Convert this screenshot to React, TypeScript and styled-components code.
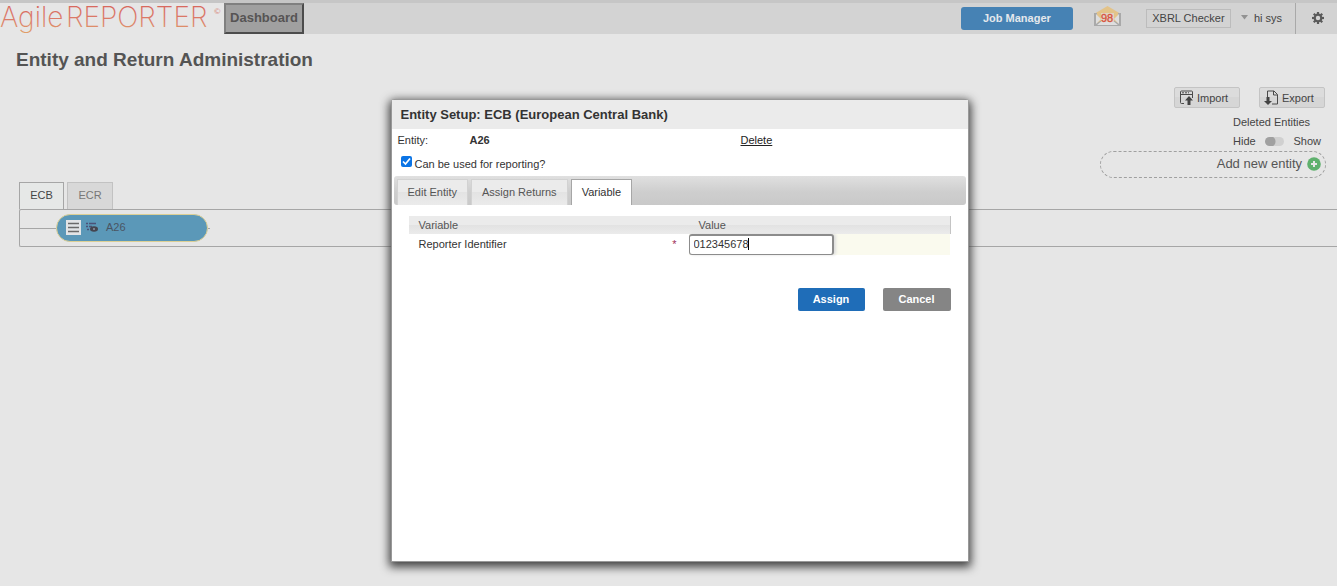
import React from 'react';
import styled, { createGlobalStyle } from 'styled-components';

const GlobalStyle = createGlobalStyle`
  * { box-sizing: border-box; }
  body {
    margin: 0;
    background: #e6e6e6;
    font-family: "Liberation Sans", Arial, sans-serif;
    font-size: 11px;
    color: #444;
  }
  button, input { font-family: inherit; font-size: inherit; color: inherit; }
`;

const Page = styled.div`
  position: relative;
  min-height: 100vh;
  overflow: hidden;
`;

const TopBar = styled.header`
  display: flex;
  height: 34px;
  border-top: 3px solid #c6c6c6;
  background: #d3d3d3;
`;

const LogoArea = styled.div`
  display: flex;
  align-items: center;
  width: 224px;
  background: #e6e6e6;
`;

const Logo = styled.svg`
  display: block;
  width: 224px;
  height: 31px;
  overflow: visible;
  font-optical-sizing: none;
`;

const DashboardButton = styled.button`
  width: 80px;
  height: 31px;
  padding: 0 0 2px;
  border: 2px solid;
  border-color: #808080 #4c4c4c #4c4c4c #808080;
  background: #a0a0a0;
  color: #565454;
  font-size: 13px;
  font-weight: bold;
`;

const TopActions = styled.div`
  display: flex;
  align-items: center;
  margin-left: auto;
`;

const JobButton = styled.button`
  width: 112px;
  height: 23px;
  padding: 0 0 2px;
  margin-right: 20px;
  border: 0;
  border-radius: 3px;
  background: #4682b4;
  color: #e4e8ec;
  font-weight: bold;
`;

const MailIcon = styled.svg`
  display: block;
  width: 29px;
  height: 22px;
  margin: 0 24px 5px 0;
`;

const CheckerButton = styled.button`
  width: 85px;
  height: 19px;
  padding: 0;
  margin: 0 10px 1px 0;
  border: 1px solid #bcbcbc;
  background: #d3d3d3;
  white-space: nowrap;
`;

const UserButton = styled.button`
  display: flex;
  align-items: center;
  gap: 6px;
  height: 100%;
  padding: 0 13px 2px 0;
  border: 0;
  border-right: 1px solid #a9a9a9;
  background: none;
`;

const SettingsButton = styled.button`
  display: flex;
  align-items: center;
  justify-content: center;
  width: 41px;
  height: 100%;
  padding: 0 0 2px 2px;
  border: 0;
  background: none;
`;

const Title = styled.h1`
  margin: 0;
  padding: 14px 16px 0;
  font-size: 19px;
  line-height: 24px;
  color: #545454;
`;

const Tools = styled.section`
  display: flex;
  flex-direction: column;
  align-items: flex-end;
  padding: 15px 11px 0 0;
`;

const ToolRow = styled.div`
  display: flex;
  gap: 19px;
  margin-right: 1px;
`;

const ToolButton = styled.button`
  display: flex;
  align-items: center;
  gap: 3px;
  width: 66px;
  height: 21px;
  padding: 0 4px;
  border: 1px solid #c4c4c4;
  border-radius: 2px;
  background: linear-gradient(#dcdcdc 50%, #d6d6d6 50%);
`;

const DeletedGroup = styled.div`
  width: 93px;
  line-height: 19px;
  padding-top: 5px;
`;

const SwitchLabel = styled.label`
  display: flex;
  align-items: center;
  justify-content: space-between;
  width: 88px;
`;

const Switch = styled.input`
  appearance: none;
  width: 19px;
  height: 9px;
  margin: 0;
  border-radius: 5px;
  background: radial-gradient(circle at 5px 50%, #a0a0a0 5px, #d0d0d0 6px);
`;

const AddEntity = styled.button`
  display: flex;
  align-items: center;
  justify-content: flex-end;
  gap: 5px;
  width: 226px;
  height: 27px;
  padding: 0 4px 2px;
  border: 1px dashed #a0a0a0;
  border-radius: 14px;
  background: none;
  font-size: 13px;
  color: #555;
`;

const EntityTabs = styled.nav`
  display: flex;
  gap: 3px;
  margin: 4px 0 0 19px;
`;

const EntityTab = styled.button<{ $active?: boolean }>`
  width: ${p => (p.$active ? 45 : 46)}px;
  height: 27px;
  padding: 0 0 2px;
  border: 1px solid ${p => (p.$active ? '#a6a6a6' : '#c2c2c2')};
  border-bottom: 0;
  background: ${p => (p.$active ? '#e6e8e7' : '#d8d8d8')};
  color: ${p => (p.$active ? '#444' : '#777')};
`;

const EntityTree = styled.div`
  display: flex;
  align-items: center;
  height: 38px;
  margin-left: 19px;
  border: 1px solid #a6a6a6;
  border-right: 0;
  border-radius: 2px 0 0 2px;
`;

const Branch = styled.div`
  width: 36px;
  border-top: 1px solid #a6a6a6;
`;

const BranchEnd = styled(Branch)`
  width: 2px;
`;

const EntityNode = styled.button`
  display: flex;
  align-items: center;
  width: 152px;
  height: 28px;
  padding: 0 9px 2px;
  border: 1px solid #dccf94;
  border-radius: 14px;
  background: #5b98b8;
  color: #4a5563;
`;

const MenuIcon = styled.svg`
  background: #e2e4e6;
  margin-right: 5px;
`;

const NodeName = styled.span`
  margin-left: 8px;
`;

const Overlay = styled.div`
  position: absolute;
  inset: 0;
  display: flex;
  justify-content: center;
  align-items: flex-start;
  padding: 99px 0 0 22px;
`;

const Dialog = styled.section`
  width: 578px;
  min-height: 463px;
  border: 1px solid #999;
  border-radius: 3px 3px 0 0;
  background: #fff;
  box-shadow: 0 3px 10px 2px #404040;
  color: #333;
`;

const DialogTitle = styled.h2`
  margin: 0;
  padding: 0 9px;
  background: #ebebeb;
  font-size: 13px;
  line-height: 29px;
`;

const EntityLine = styled.div`
  display: flex;
  align-items: center;
  height: 21px;
  padding: 0 6px;
`;

const EntityCaption = styled.span`
  width: 72px;
`;

const EntityValue = styled.strong`
  width: 271px;
`;

const DeleteLink = styled.a`
  color: #222;
  text-decoration: underline;
`;

const ReportingLabel = styled.label`
  display: flex;
  align-items: center;
  gap: 3px;
  height: 26px;
  padding: 1px 9px 0;
`;

const ReportingCheck = styled.input`
  appearance: none;
  width: 11px;
  height: 11px;
  margin: 0;
  border-radius: 2px;
  background: #0b74e5;
`;

const CheckWrap = styled.span`
  position: relative;
  display: flex;
  margin-bottom: 5px;
`;

const CheckMark = styled.svg`
  position: absolute;
  inset: 0;
  pointer-events: none;
`;

const TabStrip = styled.nav`
  display: flex;
  align-items: flex-end;
  gap: 3px;
  height: 29px;
  margin: 0 2px;
  padding: 0 3px;
  border-radius: 3px;
  background: linear-gradient(#e0e0e0, #cecece 55%, #c9c9c9);
`;

const Tab = styled.button<{ $active?: boolean }>`
  height: 26px;
  padding: 0 10px 2px;
  border: 1px solid ${p => (p.$active ? '#a6a6a6' : '#d2d2d2')};
  border-bottom: 0;
  background: ${p => (p.$active ? '#fff' : 'linear-gradient(#ebebeb 50%, #e3e3e3 50%, #ebebeb)')};
  color: ${p => (p.$active ? '#333' : '#555')};
  white-space: nowrap;
`;

const TabPanel = styled.div`
  padding: 11px 17px;
`;

const Variables = styled.table`
  width: 100%;
  table-layout: fixed;
  border-collapse: collapse;
`;

const HeadRow = styled.tr`
  height: 18px;
  background: linear-gradient(#ebebeb 50%, #e2e2e2 50%, #ebebeb);
  border-right: 1px solid #c4c4c4;
`;

const HeadCell = styled.th<{ $width?: number }>`
  width: ${p => (p.$width ? `${p.$width}px` : 'auto')};
  padding: 0 10px;
  font-weight: normal;
  text-align: left;
  color: #555;
`;

const NameCell = styled.td`
  padding: 0 12px 2px 10px;
`;

const NameLine = styled.div`
  display: flex;
  justify-content: space-between;
`;

const Required = styled.span`
  color: #a0305a;
`;

const ValueCell = styled.td`
  height: 21px;
  padding: 0;
  background: #fafaee;
`;

const ValueField = styled.div`
  position: relative;
  width: 145px;
`;

const ValueInput = styled.input`
  display: block;
  width: 145px;
  height: 21px;
  padding: 0 4px 2px;
  border: 1px solid #8c8c8c;
  border-top-width: 2px;
  border-right-width: 2px;
  border-radius: 3px;
  outline: 0;
  background: #fff;
  box-shadow: 2px 0 3px #ddd;
`;

const Caret = styled.span`
  position: absolute;
  left: 59px;
  top: 4px;
  width: 1px;
  height: 12px;
  background: #000;
`;

const Actions = styled.div`
  display: flex;
  justify-content: flex-end;
  gap: 18px;
  padding-top: 33px;
`;

const ActionButton = styled.button<{ $primary?: boolean }>`
  width: ${p => (p.$primary ? 67 : 68)}px;
  height: 23px;
  padding: 0 0 2px;
  border: 0;
  border-radius: 2px;
  background: ${p => (p.$primary ? '#1f6db8' : '#858585')};
  color: #fff;
  font-weight: bold;
`;

const teeth = [0, 45, 90, 135, 180, 225, 270, 315];

export default function App() {
  return (
    <>
      <GlobalStyle />
      <Page>
        <TopBar>
          <LogoArea>
            <Logo viewBox="0 0 224 31" role="img" aria-label="AgileREPORTER">
              <defs>
                <linearGradient id="brand" gradientUnits="userSpaceOnUse" x1="0" y1="4" x2="0" y2="32">
                  <stop offset="0" stopColor="#d8695f" />
                  <stop offset="0.5" stopColor="#dc7e6a" />
                  <stop offset="1" stopColor="#e0a468" />
                </linearGradient>
              </defs>
              <text y="24" fontFamily="Inter, sans-serif" fontWeight="200" fontSize="28" fill="url(#brand)">
                <tspan x="0">Agile</tspan><tspan x="66">REPORTER</tspan>
              </text>
              <text x="214" y="11" fontFamily="Lato, sans-serif" fontSize="8" fill="#d8897c">©</text>
            </Logo>
          </LogoArea>
          <DashboardButton>Dashboard</DashboardButton>
          <TopActions>
            <JobButton>Job Manager</JobButton>
            <MailIcon viewBox="0 0 29 22" role="img" aria-label="98 messages">
              <path d="M1 9 L14.500 1 L28 9 V21 H1Z" fill="#e3c389" />
              <path d="M1 8 H4 V18 L9 15 H20 L25 18 V8 H28 V21 H1Z" fill="#a9a9a9" />
              <path d="M3 9 L8 14 L3 19Z M26 9 L21 14 L26 19Z M4 20 L10 15 H19 L25 20Z" fill="#dedede" />
              <rect x="8" y="8" width="13" height="9" fill="#e0d3c3" />
              <text x="14" y="17" textAnchor="middle" fontSize="11" fill="#d8503c" stroke="#d8503c" strokeWidth="0.300">98</text>
            </MailIcon>
            <CheckerButton>XBRL Checker</CheckerButton>
            <UserButton>
              <svg width="7" height="5" viewBox="0 0 7 5"><path d="M0 0h7L3.500 4.500z" fill="#929292" /></svg>
              hi sys
            </UserButton>
            <SettingsButton aria-label="Settings">
              <svg width="12" height="12" viewBox="0 0 12 12">
                <circle cx="6" cy="6" r="3.300" fill="none" stroke="#5a5a5a" strokeWidth="2.200" />
                {teeth.map(a => (
                  <rect key={a} x="4.900" y="0" width="2.200" height="2.600" fill="#5a5a5a" transform={`rotate(${a} 6 6)`} />
                ))}
              </svg>
            </SettingsButton>
          </TopActions>
        </TopBar>

        <Title>Entity and Return Administration</Title>

        <Tools>
          <ToolRow>
            <ToolButton>
              <svg width="15" height="15" viewBox="0 0 15 15" fill="none" stroke="#4a4a4a">
                <path d="M5 13.500H2.500Q1.500 13.500 1.500 12.500V2Q1.500 1 2.500 1H12.500Q13.500 1 13.500 2V8M1.500 4.500H13.500" />
                <path d="M3 2.800H10" strokeDasharray="2 1" />
                <path d="M10 6L14 10.500H11.500V15H8.500V10.500H6Z" fill="#444" stroke="none" />
              </svg>
              Import
            </ToolButton>
            <ToolButton>
              <svg width="15" height="15" viewBox="0 0 15 15" fill="none" stroke="#4a4a4a">
                <path d="M3.500 7V1H10L13.500 4.500V14H8M9.500 1V5H13.500" />
                <path d="M2.500 7H5.500V11H8L4 15L0 11H2.500Z" fill="#444" stroke="none" />
              </svg>
              Export
            </ToolButton>
          </ToolRow>
          <DeletedGroup>
            <div>Deleted Entities</div>
            <SwitchLabel>
              Hide
              <Switch type="checkbox" role="switch" aria-label="Show deleted entities" />
              Show
            </SwitchLabel>
          </DeletedGroup>
          <AddEntity>
            Add new entity
            <svg width="14" height="14" viewBox="0 0 14 14">
              <circle cx="7" cy="7" r="6.800" fill="#5fb06d" />
              <path d="M7 4V10M4 7H10" stroke="#e6e6e6" strokeWidth="2" />
            </svg>
          </AddEntity>
        </Tools>

        <EntityTabs>
          <EntityTab $active>ECB</EntityTab>
          <EntityTab>ECR</EntityTab>
        </EntityTabs>
        <EntityTree>
          <Branch />
          <EntityNode>
            <MenuIcon width="15" height="15" viewBox="0 0 15 15">
              <path d="M2 3.500H13M2 7.500H13M2 11.500H13" stroke="#6a6a6a" strokeWidth="1.500" />
            </MenuIcon>
            <svg width="12" height="11" viewBox="0 0 12 11">
              <path d="M0 1.500H2M3 1.500H10M0 4.500H2M3 4.500H6M1 7.500H3" stroke="#4c5278" strokeWidth="1.400" />
              <ellipse cx="8" cy="7" rx="4" ry="2.800" fill="#454550" />
              <circle cx="8" cy="7" r="1" fill="#8b96a8" />
            </svg>
            <NodeName>A26</NodeName>
          </EntityNode>
          <BranchEnd />
        </EntityTree>

        <Overlay>
          <Dialog role="dialog" aria-labelledby="dialog-title">
            <DialogTitle id="dialog-title">Entity Setup: ECB (European Central Bank)</DialogTitle>
            <EntityLine>
              <EntityCaption>Entity:</EntityCaption>
              <EntityValue>A26</EntityValue>
              <DeleteLink href="#delete">Delete</DeleteLink>
            </EntityLine>
            <ReportingLabel>
              <CheckWrap>
                <ReportingCheck type="checkbox" defaultChecked />
                <CheckMark width="11" height="11" viewBox="0 0 11 11">
                  <path d="M2 5.500L4.500 8L9 2.500" fill="none" stroke="#fff" strokeWidth="1.700" />
                </CheckMark>
              </CheckWrap>
              Can be used for reporting?
            </ReportingLabel>
            <TabStrip>
              <Tab>Edit Entity</Tab>
              <Tab>Assign Returns</Tab>
              <Tab $active>Variable</Tab>
            </TabStrip>
            <TabPanel>
              <Variables>
                <thead>
                  <HeadRow>
                    <HeadCell $width={280}>Variable</HeadCell>
                    <HeadCell>Value</HeadCell>
                  </HeadRow>
                </thead>
                <tbody>
                  <tr>
                    <NameCell>
                      <NameLine>
                        <label htmlFor="identifier">Reporter Identifier</label>
                        <Required>*</Required>
                      </NameLine>
                    </NameCell>
                    <ValueCell>
                      <ValueField>
                        <ValueInput id="identifier" type="text" defaultValue="012345678" />
                        <Caret />
                      </ValueField>
                    </ValueCell>
                  </tr>
                </tbody>
              </Variables>
              <Actions>
                <ActionButton $primary>Assign</ActionButton>
                <ActionButton>Cancel</ActionButton>
              </Actions>
            </TabPanel>
          </Dialog>
        </Overlay>
      </Page>
    </>
  );
}
